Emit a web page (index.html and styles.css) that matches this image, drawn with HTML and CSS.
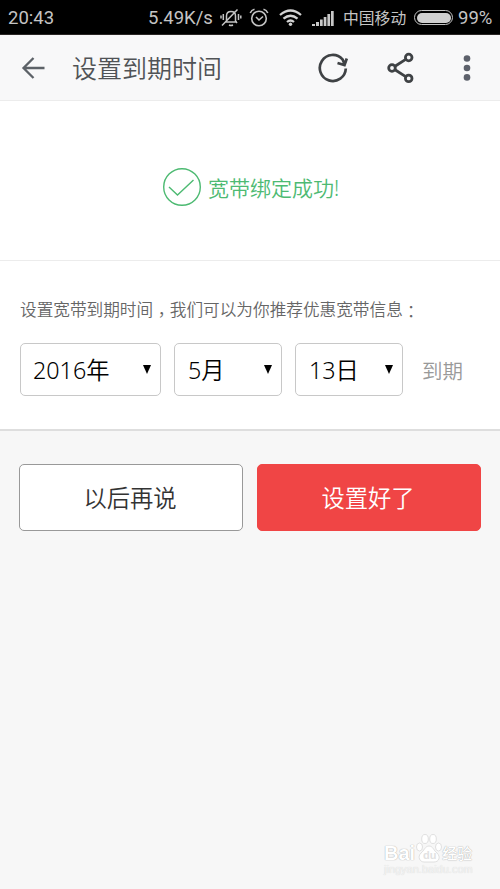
FILE: index.html
```html
<!DOCTYPE html>
<html lang="zh-CN">
<head>
<meta charset="utf-8">
<title>设置到期时间</title>
<link rel="stylesheet" href="styles.css">
</head>
<body>
<div class="status">
  <span class="clock">20:43</span>
  <span class="speed">5.49K/s</span>
  <svg class="mute" width="22" height="20" viewBox="0 0 22 20" fill="none" stroke="#c4c4c4" stroke-width="1.5">
    <path d="M5 14h12M6.500 13V8c0-3 2-4.500 4.500-4.500S15.500 5 15.500 8v5l1.500 2M9 17q2 1 4 0M2 17.500L17.500 1.500M3.300 6v6M1 7.500v3M18.500 6v6M20.800 7.500v3"/>
  </svg>
  <svg class="alarm" width="20" height="20" viewBox="0 0 20 20" fill="none" stroke="#c4c4c4" stroke-width="1.600">
    <circle cx="10" cy="10.500" r="7.300"/><path d="M7 9l3 3 4-3.500M1.200 5Q2.500 2 5.500 1.300M18.800 5Q17.500 2 14.500 1.300"/>
  </svg>
  <svg class="wifi" width="23" height="18" viewBox="0 0 23 18" fill="none" stroke="#d2d2d2" stroke-width="2.300">
    <path d="M1 6Q11.500-3 22 6M4.500 9.700Q11.500 3.700 18.500 9.700M8 13Q11.500 10 15 13"/><circle cx="11.500" cy="15.300" r="1.700" fill="#d2d2d2" stroke="none"/>
  </svg>
  <svg class="signal" width="22" height="16" viewBox="0 0 22 16" fill="#c8c8c8">
    <path d="M0 14h3v2H0zM4 12h3v4H4zM8 9.500h2.700V16H8zM11.700 7h2.700v9h-2.700zM15.400 4h2.700v12h-2.700zM19 1h2.700v15H19z"/>
  </svg>
  <span class="carrier">中国移动</span>
  <span class="battery"></span>
  <span class="percent">99%</span>
</div>
<header class="bar">
  <svg class="back" width="24" height="24" viewBox="0 0 24 24" fill="none" stroke="#5d6268" stroke-width="2.300"><path d="M23.500 12H3M12.500 2L2.500 12l10 10"/></svg>
  <h1 class="title">设置到期时间</h1>
  <svg class="reload" width="32" height="32" viewBox="0 0 32 32" fill="none" stroke="#3f4245" stroke-width="2.700">
    <path d="M27.800 16.500A13 13 0 1 1 24.500 7.300L26.500 12M19.500 11l7 2 2.300-6.500"/>
  </svg>
  <svg class="share" width="28" height="32" viewBox="0 0 28 32" fill="none" stroke="#3f4245" stroke-width="2.800">
    <circle cx="5" cy="16" r="3.300"/><circle cx="21.700" cy="5.500" r="3.300"/><circle cx="21.700" cy="26.400" r="3.300"/><path d="M8 14.200L18.700 7.400M8 17.800l10.700 6.800"/>
  </svg>
  <svg class="more" width="8" height="26" viewBox="0 0 8 26" fill="#5d616b"><circle cx="4" cy="3.500" r="3.300"/><circle cx="4" cy="13" r="3.300"/><circle cx="4" cy="22.400" r="3.300"/></svg>
</header>
<section class="success">
  <svg width="40" height="40" viewBox="0 0 40 40" fill="none" stroke="#4dba72" stroke-width="1.400"><circle cx="20" cy="20" r="18.300"/><path d="M7 20l8.500 8L31.500 13"/></svg>
  <span>宽带绑定成功!</span>
</section>
<section class="expiry">
  <p class="hint">设置宽带到期时间<span class="punct comma" lang="zh-TW">，</span>我们可以为你推荐优惠宽带信息<span class="punct colon" lang="zh-TW">：</span></p>
  <div class="fields">
    <div class="select year"><span>2016年</span><i class="caret"></i></div>
    <div class="select"><span>5月</span><i class="caret"></i></div>
    <div class="select"><span>13日</span><i class="caret"></i></div>
    <span class="suffix">到期</span>
  </div>
</section>
<div class="actions">
  <button class="btn">以后再说</button>
  <button class="btn primary">设置好了</button>
</div>
<div class="watermark">
  <div class="brand"><span>Bai</span>
    <svg width="26" height="29" viewBox="0 0 26 29" fill="#fff" stroke="#d8d8d8" stroke-width=".8"><ellipse cx="3.500" cy="13" rx="3" ry="4"/><ellipse cx="9" cy="5" rx="3.300" ry="4.500"/><ellipse cx="17" cy="5" rx="3.300" ry="4.500"/><ellipse cx="22.500" cy="13" rx="3" ry="4"/><path d="M13 12c-4 0-5 5-8 7-4 4-1 9 3 9h10c5 0 7-5 3-9-3-2-4-7-8-7z"/><text x="7" y="25" class="du">du</text></svg>
    <span class="cn">经验</span></div>
  <div class="url">jingyan.baidu.com</div>
</div>
</body>
</html>
```
FILE: styles.css
```css
* { box-sizing: border-box; }
body {
  margin: 0;
  height: 889px;
  background: #f7f7f7;
  font-family: "Noto Sans", "Noto Sans CJK SC", sans-serif;
  font-weight: 350;
  position: relative;
  overflow: hidden;
}
svg { display: block; flex: none; }
.status {
  height: 35px;
  background: #000;
  border-bottom: 1px solid #2a2625;
  display: flex;
  align-items: center;
  padding: 1px 0 0 8px;
  color: #c4c4c4;
  font: 400 18.500px/34px Roboto, sans-serif;
  white-space: nowrap;
}
.clock { width: 140px; }
.speed { width: 72px; }
.mute { margin-right: 7px; }
.alarm { margin-right: 10px; }
.wifi { margin-right: 10px; }
.signal { margin-right: 9px; }
.carrier { width: 71px; font: 400 15.800px/34px "Noto Sans CJK SC", sans-serif; }
.battery {
  width: 39px;
  height: 15px;
  border: 1.500px solid #c4c4c4;
  border-radius: 8px;
  background: #000;
  padding: 1.500px;
  margin-right: 5px;
  flex: none;
}
.battery::before {
  content: "";
  display: block;
  height: 100%;
  border-radius: 5px;
  background: #d0d0d0;
}
.bar {
  height: 66px;
  background: #f8f8f9;
  border-bottom: 1px solid #ececec;
  display: flex;
  align-items: center;
  padding-left: 21px;
}
.title {
  margin: 0 0 0 27px;
  padding-bottom: 2px;
  width: 246px;
  font: 350 25px/34px "Noto Sans CJK SC", sans-serif;
  color: #505356;
}
.share { margin-left: 37px; }
.more { margin-left: 48px; }
.success {
  height: 160px;
  background: #fff;
  border-bottom: 1px solid #ececec;
  display: flex;
  align-items: center;
  padding: 13px 0 0 162px;
  gap: 6px;
  font-size: 21px;
  color: #4dba72;
}
.expiry {
  height: 170px;
  background: #fff;
  border-bottom: 2px solid #dedede;
  padding: 36px 20px 0;
}
.hint {
  margin: 0;
  font: 350 16.650px/24px "Noto Sans CJK SC", sans-serif;
  color: #666;
  white-space: nowrap;
}
.punct { font-family: "Noto Sans CJK TC", sans-serif; position: relative; }
.comma { top: 5px; }
.colon { top: 2px; }
.fields { display: flex; align-items: center; gap: 13px; margin-top: 22px; }
.select {
  width: 108px;
  height: 53px;
  border: 1px solid #c8c8c8;
  border-radius: 5px;
  display: flex;
  align-items: center;
  justify-content: space-between;
  padding: 0 9px 2px 13px;
  font-size: 23.300px;
  color: #000;
}
.select.year { width: 141px; padding-left: 12px; }
.caret {
  border: 4.500px solid transparent;
  border-top: 9px solid #000;
  border-bottom: 0;
  position: relative;
  top: 1px;
}
.suffix { margin-left: 6px; font-size: 20.500px; color: #999; }
.actions { display: flex; gap: 14px; padding: 33px 19px 0 19px; }
.btn {
  flex: 1;
  height: 67px;
  padding: 0 2px 2px 0;
  border: 1px solid #999;
  border-radius: 5px;
  background: #fff;
  color: #333;
  font: 350 23.300px "Noto Sans CJK SC", sans-serif;
}
.primary { background: #f04545; border-color: #f04545; color: #fff; }
.watermark {
  position: absolute;
  left: 384px;
  top: 834px;
  color: #fff;
  text-shadow: 0 0 1px #a8a8a8, 0 0 1px #c8c8c8;
}
.brand { display: flex; align-items: flex-end; font: 700 20px/20px "Liberation Sans", sans-serif; }
.brand svg { margin: 0 0 0 1px; }
.brand .cn { font: 500 15px/20px "Noto Sans CJK SC", sans-serif; }
.du { font: 700 11px "Liberation Sans", sans-serif; fill: #e2e2e2; stroke: none; text-shadow: none; }
.url { font: 400 11px/13px "Liberation Sans", sans-serif; color: #f3f3f3; text-shadow: 0 0 1px #d0d0d0; }
```
